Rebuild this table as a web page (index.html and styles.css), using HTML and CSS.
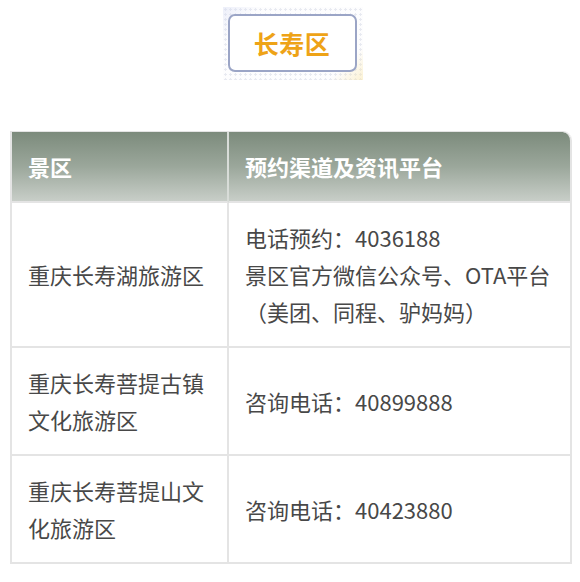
FILE: index.html
```html
<!DOCTYPE html>
<html lang="zh">
<head>
<meta charset="utf-8">
<link rel="stylesheet" href="styles.css">
</head>
<body>
<div class="page">
  <div class="title-wrap">
    <div class="title-deco">
      <div class="title-box">长寿区</div>
    </div>
  </div>
  <div class="table">
    <div class="cell head first">景区</div>
    <div class="cell head last">预约渠道及资讯平台</div>

    <div class="cell first mid">重庆长寿湖旅游区</div>
    <div class="cell last">
      <span class="line">电话预约：4036188</span>
      <span class="line">景区官方微信公众号、OTA平台</span>
      <span class="line">（美团、同程、驴妈妈）</span>
    </div>

    <div class="cell first">重庆长寿菩提古镇文化旅游区</div>
    <div class="cell last mid">咨询电话：40899888</div>

    <div class="cell first">重庆长寿菩提山文化旅游区</div>
    <div class="cell last mid">咨询电话：40423880</div>
  </div>
</div>
</body>
</html>
```
FILE: styles.css
```css
html, body {
  margin: 0;
  padding: 0;
  background: #ffffff;
}
body {
  font-family: "Noto Sans CJK SC", "Noto Sans", sans-serif;
  width: 580px;
}
.page {
  padding-top: 7px;
}
.title-wrap {
  display: flex;
  justify-content: center;
  padding-left: 5px;
}
.title-deco {
  width: 140px;
  height: 73px;
  box-sizing: border-box;
  padding: 7px 6px 8px 5px;
  background:
    linear-gradient(135deg, rgba(205, 212, 240, 0.35) 0%, rgba(255,255,255,0) 18%),
    linear-gradient(315deg, rgba(250, 228, 160, 0.45) 0%, rgba(255,255,255,0) 16%),
    radial-gradient(circle, #e8eaf1 1px, rgba(255,255,255,0) 1.3px) 0 0 / 5px 5px,
    #fdfdfe;
}
.title-box {
  height: 100%;
  box-sizing: border-box;
  border: 2px solid #9ba5c6;
  border-radius: 7px;
  background: #ffffff;
  display: flex;
  align-items: center;
  justify-content: center;
  color: #eea317;
  font-size: 25px;
  font-weight: 700;
  letter-spacing: 0.5px;
}
.table {
  margin: 51px 8px 0 10px;
  display: grid;
  grid-template-columns: 217px 1fr;
  border-left: 2px solid #e4e4e4;
  border-top: 1px solid #e4e4e4;
  border-top-right-radius: 9px;
  overflow: hidden;
}
.cell {
  box-sizing: border-box;
  padding: 16px 16px 16px 16px;
  font-size: 22px;
  line-height: 37px;
  color: #484848;
  border-right: 2px solid #e4e4e4;
  border-bottom: 2px solid #e4e4e4;
}
.cell.last {
  padding-left: 16px;
  padding-right: 0;
}
.cell.mid {
  display: flex;
  align-items: center;
}
.cell.head {
  height: 71px;
  padding-top: 0;
  padding-bottom: 0;
  display: flex;
  align-items: center;
  color: #ffffff;
  font-weight: 700;
  background: linear-gradient(180deg, #7c8b7c 0%, #9ba79b 50%, #c8cec8 100%);
  border-bottom: 2px solid #e4e4e4;
}
.cell.head.first {
  border-right: 2px solid #d8dcd8;
}
.cell.head.last {
  border-top-right-radius: 9px;
}
.line {
  display: block;
  white-space: nowrap;
}
```
